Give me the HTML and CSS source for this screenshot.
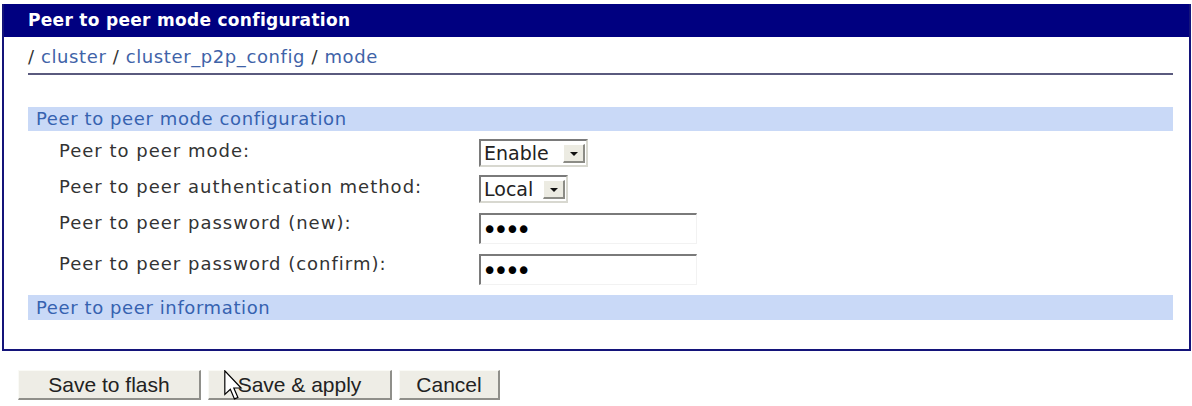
FILE: index.html
```html
<!DOCTYPE html>
<html lang="en">
  <head>
    <meta charset="UTF-8" />
    <meta name="viewport" content="width=device-width, initial-scale=1.0" />
    <title>Peer to peer mode configuration</title>
    <link rel="stylesheet" href="styles.css">
  </head>
  <body>
    <div class="panel">
      <div class="panel-title">Peer to peer mode configuration</div>
      <div class="panel-body">
        <div class="crumbs">
          / <a href="#">cluster</a> / <a href="#">cluster_p2p_config</a> / <a href="#">mode</a>
        </div>
        <form class="config-form" id="p2pForm">
          <div class="section">Peer to peer mode configuration</div>
          <div class="row row-select">
            <label for="p2pMode">Peer to peer mode:</label>
            <span class="select select-mode">
              <select id="p2pMode">
                <option>Enable</option>
                <option>Disable</option>
              </select>
              <span class="drop"></span>
            </span>
          </div>
          <div class="row row-select">
            <label for="p2pAuth">Peer to peer authentication method:</label>
            <span class="select select-auth">
              <select id="p2pAuth">
                <option>Local</option>
                <option>Radius</option>
              </select>
              <span class="drop"></span>
            </span>
          </div>
          <div class="row row-input">
            <label for="p2pPass">Peer to peer password (new):</label>
            <input type="password" id="p2pPass" value="abcd" />
          </div>
          <div class="row row-input">
            <label for="p2pConfirm">Peer to peer password (confirm):</label>
            <input type="password" id="p2pConfirm" value="abcd" />
          </div>
          <div class="section section-info">Peer to peer information</div>
        </form>
      </div>
    </div>

    <div class="actions">
      <button type="submit" form="p2pForm" class="btn btn-flash">Save to flash</button>
      <button type="submit" form="p2pForm" class="btn btn-apply">Save &amp; apply</button>
      <button type="reset" form="p2pForm" class="btn btn-cancel">Cancel</button>
    </div>

    <!-- mouse pointer resting on the apply button -->
    <svg class="pointer" width="19" height="30" viewBox="0 0 12 19">
      <path d="M0.5 0.5 L0.5 15.5 L4 12.2 L6.6 18.3 L8.8 17.4 L6.2 11.4 L10.8 11.4 Z"
            fill="#fff" stroke="#000" stroke-width="0.75" stroke-linejoin="miter" />
    </svg>
  </body>
</html>
```

FILE: styles.css
```css
body {
  font-family: "DejaVu Sans", Verdana, sans-serif;
  margin: 4px 1px 0 2px;
  padding: 0;
  background-color: #fff;
  color: #333;
  position: relative;
}
.panel {
  border: 2px solid #14147a;
  border-top: 0;
}
.panel-title {
  background-color: #000080;
  color: #fff;
  font-weight: bold;
  font-size: 17px;
  letter-spacing: 0.3px;
  height: 33px;
  line-height: 33px;
  padding-left: 24px;
}
.panel-body {
  padding: 10px 16px 29px 24px;
}
.crumbs {
  font-size: 18px;
  letter-spacing: 0.6px;
  line-height: 20px;
  color: #333;
  padding-bottom: 6px;
  border-bottom: 2px solid #5a5a7e;
}
.crumbs a {
  color: #3f63a8;
  text-decoration: none;
}
.config-form {
  margin-top: 32px;
}
.section {
  background-color: #c9d9f7;
  color: #3662b0;
  font-size: 18px;
  letter-spacing: 0.6px;
  height: 24px;
  line-height: 24px;
  padding-left: 8px;
}
.section-info {
  margin-top: 10px;
  height: 25px;
  line-height: 25px;
}
.row {
  display: flex;
  align-items: flex-start;
  padding-left: 31px;
  margin-top: 8px;
}
.row-input {
  margin-top: 10px;
}
.row label {
  width: 420px;
  font-size: 18px;
  letter-spacing: 1px;
  line-height: 20px;
  padding-top: 2px;
  color: #333;
}
.row-input label {
  padding-top: 0;
}

/* classic inset drop-down */
.select {
  display: inline-flex;
  align-items: center;
  box-sizing: border-box;
  height: 28px;
  border-top: 2px solid #7a7a7a;
  border-left: 2px solid #7a7a7a;
  border-right: 2px solid #d8d8d0;
  border-bottom: 2px solid #d8d8d0;
  background-color: #fff;
}
.select-mode {
  width: 109px;
}
.select-auth {
  width: 89px;
}
.select select {
  appearance: none;
  -webkit-appearance: none;
  border: 0;
  outline: 0;
  background: transparent;
  font-family: "DejaVu Sans", Verdana, sans-serif;
  font-size: 19px;
  color: #222;
  padding: 0 0 0 3px;
  margin: 0;
  flex: 1;
  min-width: 0;
  height: 24px;
}
.drop {
  width: 22px;
  height: 19px;
  margin-right: 1px;
  box-sizing: border-box;
  background-color: #ecebe2;
  border-top: 1px solid #fff;
  border-left: 1px solid #fff;
  border-right: 2px solid #8c8c86;
  border-bottom: 2px solid #8c8c86;
  position: relative;
}
.drop::after {
  content: "";
  position: absolute;
  left: 6px;
  top: 7px;
  border-left: 4px solid transparent;
  border-right: 4px solid transparent;
  border-top: 4px solid #111;
}
.row input {
  box-sizing: border-box;
  width: 218px;
  height: 31px;
  border-top: 2px solid #7a7a7a;
  border-left: 2px solid #7a7a7a;
  border-right: 1px solid #f2f2f2;
  border-bottom: 1px solid #f2f2f2;
  padding: 2px 1px 0;
  font-family: "DejaVu Sans", sans-serif;
  font-size: 26px;
  letter-spacing: -4px;
  color: #000;
  outline: 0;
}

.actions {
  display: flex;
  gap: 7px;
  padding-left: 16px;
  margin-top: 19px;
}
.btn {
  font-family: "Liberation Sans", Arial, sans-serif;
  font-size: 21px;
  color: #222;
  height: 30px;
  padding: 0;
  background-color: #eeede6;
  border-top: 1px solid #fafaf6;
  border-left: 1px solid #fafaf6;
  border-right: 2px solid #8f8f8a;
  border-bottom: 2px solid #8f8f8a;
}
.btn-flash {
  width: 183px;
}
.btn-apply {
  width: 184px;
}
.btn-cancel {
  width: 101px;
}
.pointer {
  position: absolute;
  left: 222px;
  top: 366px;
}
```
